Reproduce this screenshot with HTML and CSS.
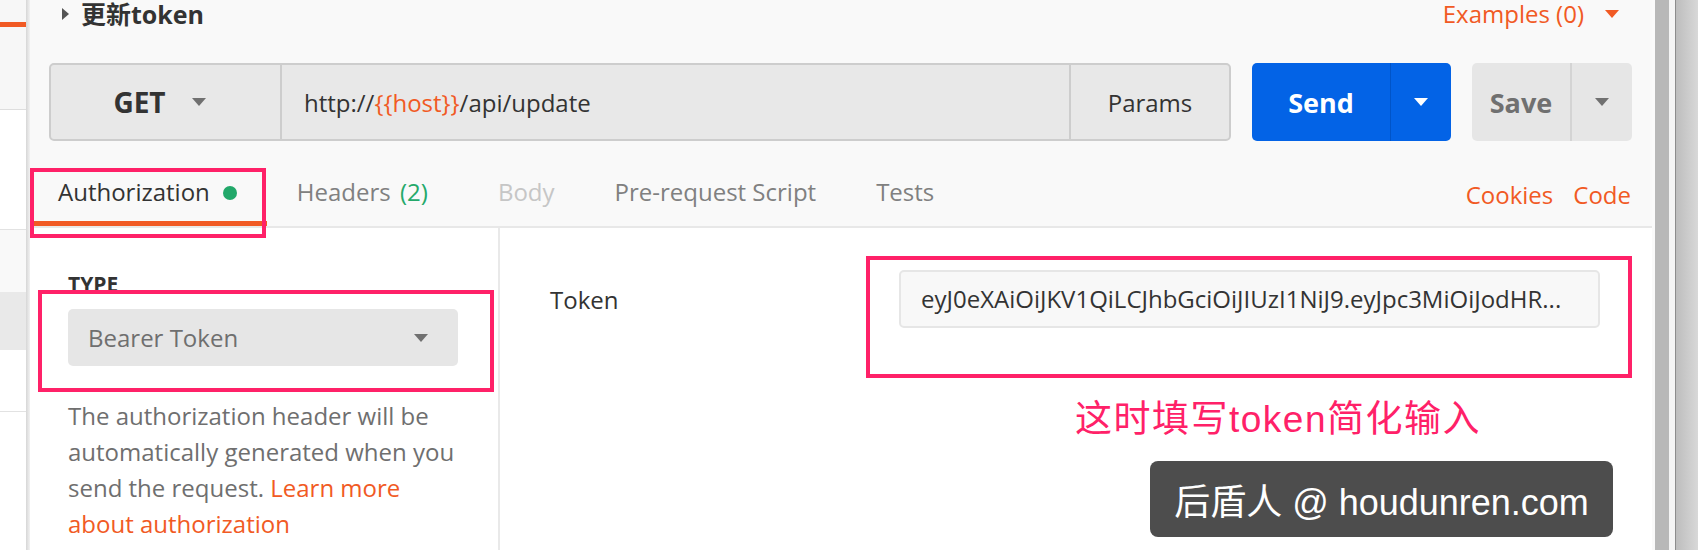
FILE: index.html
```html
<!DOCTYPE html>
<html lang="zh-CN">
<head>
<meta charset="utf-8">
<title>更新token</title>
<link rel="stylesheet" href="styles.css">
</head>
<body>
<div class="app">
  <aside class="sidebar">
    <div class="sb-top"><div class="sb-accent"></div></div>
    <div class="sb-gap"></div>
    <div class="sb-row"></div>
    <div class="sb-sel"></div>
    <div class="sb-row2"></div>
  </aside>
  <div class="edge"></div>
  <main class="main">
    <div class="top">
      <div class="head">
        <div class="title"><span class="caret-r"></span>更新token</div>
        <div class="examples">Examples (0)<span class="tri tri-orange"></span></div>
      </div>
      <div class="url-row">
        <div class="url-bar">
          <div class="method">GET<span class="tri"></span></div>
          <div class="url">http://<span class="var">{{host}}</span>/api/update</div>
          <div class="params">Params</div>
        </div>
        <div class="send"><div class="send-main">Send</div><div class="send-arrow"><span class="tri tri-white"></span></div></div>
        <div class="save"><div class="save-main">Save</div><div class="save-arrow"><span class="tri"></span></div></div>
      </div>
      <div class="tabs">
        <div class="tab active">Authorization<span class="dot"></span></div>
        <div class="tab tab-headers">Headers <span class="green">(2)</span></div>
        <div class="tab muted">Body</div>
        <div class="tab">Pre-request Script</div>
        <div class="tab">Tests</div>
        <div class="tab-links"><span>Cookies</span><span>Code</span></div>
      </div>
    </div>
    <div class="content">
      <div class="auth-left">
        <div class="type-label">TYPE</div>
        <div class="select">Bearer Token<span class="tri"></span></div>
        <p class="desc">The authorization header will be<br>automatically generated when you<br>send the request. <span class="link">Learn more<br>about authorization</span></p>
      </div>
      <div class="auth-right">
        <div class="token-row">
          <div class="token-label">Token</div>
          <div class="token-input">eyJ0eXAiOiJKV1QiLCJhbGciOiJIUzI1NiJ9.eyJpc3MiOiJodHR...</div>
        </div>
      </div>
    </div>
  </main>
  <div class="gutter">
    <div class="g-pad"></div>
    <div class="g-bar"></div>
    <div class="g-gap"></div>
    <div class="g-line"></div>
    <div class="g-rest"></div>
  </div>

  <div class="mark mark-tab"></div>
  <div class="mark mark-type"></div>
  <div class="mark mark-token"></div>
  <div class="note">这时填写token简化输入</div>
  <div class="watermark">后盾人 @ houdunren.com</div>
</div>
</body>
</html>
```

FILE: styles.css
```css
* { box-sizing: border-box; }
html, body { margin: 0; padding: 0; }
body {
  width: 1698px;
  height: 550px;
  overflow: hidden;
  background: #fff;
  font-family: "Open Sans", "Noto Sans CJK SC", sans-serif;
  color: #333;
}
.app { position: relative; display: flex; height: 550px; }

/* left sidebar */
.sidebar { width: 26px; flex: none; display: flex; flex-direction: column; background: #fff; }
.sb-top { height: 110px; background: #f7f7f7; border-bottom: 1px solid #dedede; padding-top: 22px; }
.sb-accent { height: 5px; background: #f15a24; }
.sb-gap { height: 120px; border-bottom: 1px solid #e2e2e2; }
.sb-row { height: 62px; background: #f9f9f9; }
.sb-sel { height: 58px; background: #e9e9e9; }
.sb-row2 { height: 62px; border-bottom: 1px solid #e2e2e2; }
.edge { width: 4px; flex: none; background: linear-gradient(to right, #d6d6d6, #f2f2f2); }

/* main panel */
.main { width: 1622px; flex: none; display: flex; flex-direction: column; background: #fff; }
.top { background: #f9f9f9; }

.head { height: 28px; display: flex; align-items: center; justify-content: space-between; padding: 0 33px 0 32px; }
.title { font-size: 25px; font-weight: 700; line-height: 28px; color: #333; display: flex; align-items: center; }
.caret-r { width: 0; height: 0; border-top: 6px solid transparent; border-bottom: 6px solid transparent; border-left: 7px solid #555; margin-right: 12px; }
.examples { font-size: 24px; line-height: 28px; color: #f15a24; display: flex; align-items: center; }

.tri { display: inline-block; width: 0; height: 0; border-left: 7px solid transparent; border-right: 7px solid transparent; border-top: 8px solid #707070; }
.tri-orange { border-top-color: #f15a24; margin-left: 21px; }
.tri-white { border-top-color: #fff; }

.url-row { margin-top: 35px; height: 78px; padding: 0 20px 0 19px; display: flex; gap: 21px; }
.url-bar { flex: 1; display: flex; background: #e8e8e8; border: 2px solid #cdcdcd; border-radius: 5px; }
.method { width: 231px; border-right: 2px solid #cdcdcd; display: flex; align-items: center; justify-content: center; gap: 26px; font-size: 28px; font-weight: 700; color: #333; padding-right: 12px; }
.url { flex: 1; display: flex; align-items: center; padding-left: 22px; font-size: 24px; color: #333; }
.var { color: #f15a24; }
.params { width: 160px; border-left: 2px solid #cdcdcd; display: flex; align-items: center; justify-content: center; font-size: 24px; color: #333; }

.send { width: 199px; display: flex; background: #0363e6; border-radius: 5px; }
.send-main { width: 138px; display: flex; align-items: center; justify-content: center; font-size: 27px; font-weight: 700; color: #fff; }
.send-arrow { flex: 1; border-left: 1px solid #0054c8; display: flex; align-items: center; justify-content: center; }
.save { width: 160px; display: flex; background: #e6e6e6; border-radius: 5px; }
.save-main { width: 100px; border-right: 2px solid #d4d4d4; display: flex; align-items: center; justify-content: center; font-size: 27px; font-weight: 700; color: #707070; }
.save-arrow { flex: 1; display: flex; align-items: center; justify-content: center; }

.tabs { height: 87px; border-bottom: 2px solid #e8e8e8; display: flex; align-items: flex-end; padding-right: 21px; }
.tab { height: 65px; padding: 15px 30px 0; font-size: 24px; line-height: 32px; color: #808080; white-space: nowrap; }
.tab.active { padding-left: 28px; color: #333; border-bottom: 5px solid #f15a24; }
.tab.tab-headers { padding-right: 40px; }
.tab.muted { color: #c6c6c6; }
.green { color: #25a96b; margin-left: 3px; }
.dot { display: inline-block; width: 14px; height: 14px; border-radius: 50%; background: #22a86a; margin-left: 13px; vertical-align: 1px; }
.tab-links { margin-left: auto; height: 65px; padding-top: 18px; display: flex; gap: 20px; font-size: 24px; line-height: 32px; color: #f15a24; }

/* content */
.content { flex: 1; display: flex; background: #fff; }
.auth-left { width: 470px; flex: none; border-right: 2px solid #e9e9e9; padding: 41px 0 0 38px; }
.type-label { font-size: 21px; font-weight: 700; line-height: 30px; color: #333; }
.select { margin-top: 10px; width: 390px; height: 57px; background: #e6e6e6; border-radius: 5px; display: flex; align-items: center; justify-content: space-between; padding: 0 30px 0 20px; font-size: 24px; color: #6f6f6f; }
.desc { margin: 32px 0 0; font-size: 24px; line-height: 36px; color: #6f6f6f; white-space: nowrap; }
.link { color: #f15a24; }

.auth-right { flex: 1; padding: 42px 52px 0 50px; }
.token-row { display: flex; align-items: center; }
.token-label { width: 349px; flex: none; font-size: 24px; color: #333; }
.token-input { flex: 1; height: 58px; background: #f8f8f8; border: 2px solid #e6e6e6; border-radius: 5px; padding: 0 20px; font-size: 24px; line-height: 54px; color: #333; white-space: nowrap; overflow: hidden; }

/* right gutter */
.gutter { width: 46px; flex: none; display: flex; }
.g-pad { width: 3px; background: #fafafa; }
.g-bar { width: 14px; background: #b8b8b8; }
.g-gap { width: 6px; background: #f4f4f4; }
.g-line { width: 1px; background: #8c8c8c; }
.g-rest { flex: 1; background: linear-gradient(to right, #bdbdbd, #d8d8d8); }

/* annotations */
.mark { position: absolute; border: 4px solid #ff2168; }
.mark-tab { left: 30px; top: 168px; width: 236px; height: 70px; }
.mark-type { left: 38px; top: 290px; width: 456px; height: 102px; }
.mark-token { left: 866px; top: 256px; width: 766px; height: 122px; }
.note { position: absolute; left: 1075px; top: 397px; font-family: "Liberation Sans", "Noto Sans CJK SC", sans-serif; font-size: 37px; letter-spacing: 1.5px; line-height: 46px; color: #ff2168; white-space: nowrap; }
.watermark { position: absolute; left: 1150px; top: 461px; width: 463px; height: 76px; background: #4d4d4d; border-radius: 8px; color: #fff; display: flex; align-items: center; justify-content: center; font-family: "Liberation Sans", "Noto Sans CJK SC", sans-serif; font-size: 36px; white-space: nowrap; }
```
